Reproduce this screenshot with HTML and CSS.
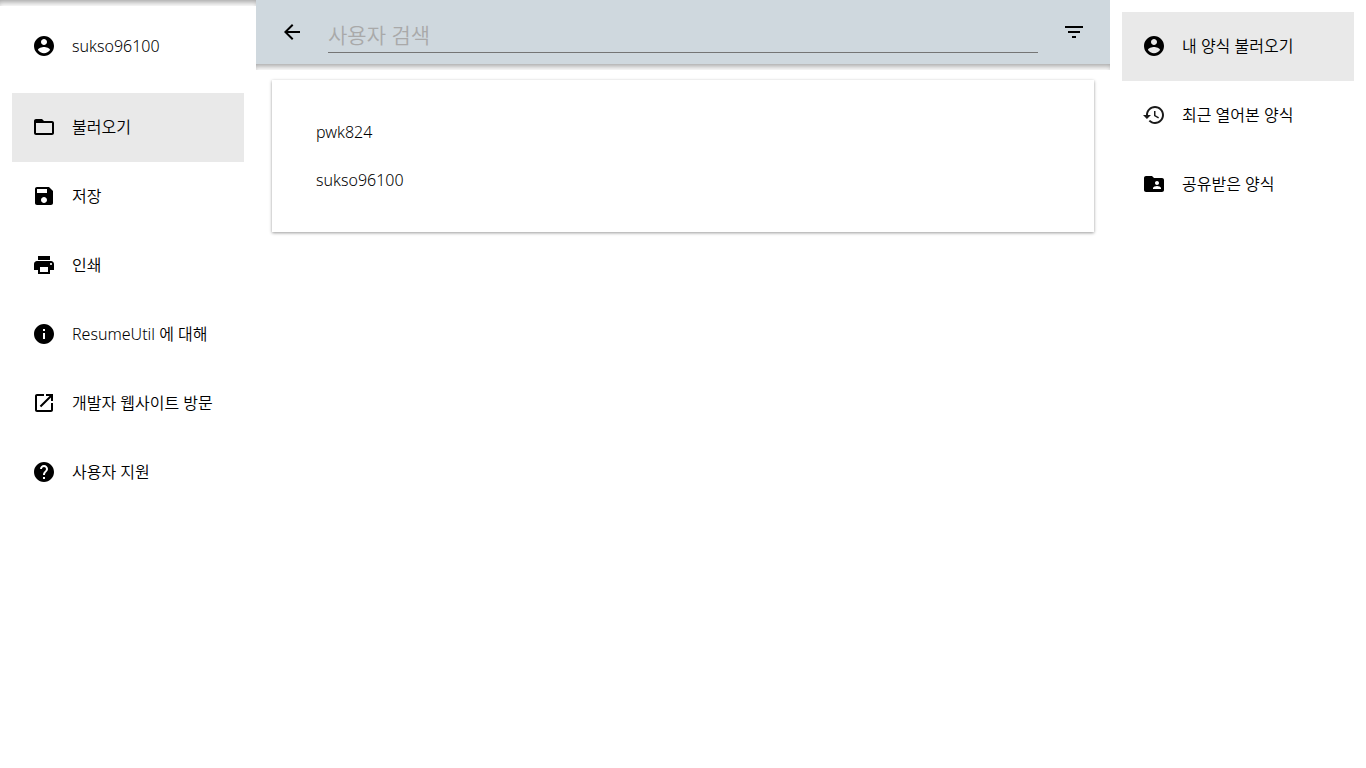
FILE: index.html
```html
<!DOCTYPE html>
<html lang="ko">
<head>
<meta charset="utf-8">
<meta name="viewport" content="width=device-width, initial-scale=1">
<title>ResumeUtil</title>
<link rel="stylesheet" href="styles.css">
</head>
<body>
<div class="app">
  <nav class="sidebar sidebar-main" aria-label="메뉴">
    <a class="item" href="#account">
      <svg class="icon" viewBox="0 0 24 24"><path d="M12 2C6.48 2 2 6.48 2 12s4.480 10 10 10 10-4.480 10-10S17.520 2 12 2zm0 3c1.660 0 3 1.340 3 3s-1.340 3-3 3-3-1.340-3-3 1.340-3 3-3zm0 14.200c-2.500 0-4.710-1.280-6-3.220.030-1.990 4-3.080 6-3.080 1.990 0 5.970 1.090 6 3.080-1.290 1.940-3.500 3.220-6 3.220z"/></svg>
      <span>sukso96100</span>
    </a>
    <div class="menu">
      <a class="item item-selected" href="#load" aria-current="page">
        <svg class="icon" viewBox="0 0 24 24"><path d="M20 6h-8l-2-2H4c-1.100 0-1.990.9-1.990 2L2 18c0 1.100.9 2 2 2h16c1.100 0 2-.9 2-2V8c0-1.100-.9-2-2-2zm0 12H4V8h16v10z"/></svg>
        <span>불러오기</span>
      </a>
      <a class="item" href="#save">
        <svg class="icon" viewBox="0 0 24 24"><path d="M17 3H5c-1.110 0-2 .9-2 2v14c0 1.100.89 2 2 2h14c1.100 0 2-.9 2-2V7l-4-4zm-5 16c-1.660 0-3-1.340-3-3s1.340-3 3-3 3 1.340 3 3-1.340 3-3 3zm3-10H5V5h10v4z"/></svg>
        <span>저장</span>
      </a>
      <a class="item" href="#print">
        <svg class="icon" viewBox="0 0 24 24"><path d="M19 8H5c-1.660 0-3 1.340-3 3v6h4v4h12v-4h4v-6c0-1.660-1.340-3-3-3zm-3 11H8v-5h8v5zm3-7c-.55 0-1-.45-1-1s.45-1 1-1 1 .45 1 1-.45 1-1 1zm-1-9H6v4h12V3z"/></svg>
        <span>인쇄</span>
      </a>
      <a class="item" href="#about">
        <svg class="icon" viewBox="0 0 24 24"><path d="M12 2C6.480 2 2 6.480 2 12s4.480 10 10 10 10-4.480 10-10S17.520 2 12 2zm1 15h-2v-6h2v6zm0-8h-2V7h2v2z"/></svg>
        <span>ResumeUtil 에 대해</span>
      </a>
      <a class="item" href="#website">
        <svg class="icon" viewBox="0 0 24 24"><path d="M19 19H5V5h7V3H5c-1.110 0-2 .9-2 2v14c0 1.100.89 2 2 2h14c1.100 0 2-.9 2-2v-7h-2v7zM14 3v2h3.590l-9.830 9.830 1.410 1.410L19 6.410V10h2V3h-7z"/></svg>
        <span>개발자 웹사이트 방문</span>
      </a>
      <a class="item" href="#support">
        <svg class="icon" viewBox="0 0 24 24"><path d="M12 2C6.480 2 2 6.480 2 12s4.480 10 10 10 10-4.480 10-10S17.520 2 12 2zm1 17h-2v-2h2v2zm2.070-7.750l-.9.920C13.450 12.900 13 13.500 13 15h-2v-.5c0-1.100.45-2.100 1.170-2.830l1.240-1.260c.37-.36.59-.86.59-1.410 0-1.100-.9-2-2-2s-2 .9-2 2H8c0-2.210 1.790-4 4-4s4 1.790 4 4c0 .88-.36 1.680-.93 2.250z"/></svg>
        <span>사용자 지원</span>
      </a>
    </div>
  </nav>

  <main class="content">
    <header class="toolbar">
      <button class="icon-button" type="button" aria-label="뒤로">
        <svg class="icon" viewBox="0 0 24 24"><path d="M20 11H7.830l5.590-5.590L12 4l-8 8 8 8 1.410-1.410L7.830 13H20v-2z"/></svg>
      </button>
      <input class="search" type="text" placeholder="사용자 검색" aria-label="사용자 검색">
      <button class="icon-button" type="button" aria-label="필터">
        <svg class="icon" viewBox="0 0 24 24"><path d="M10 18h4v-2h-4v2zM3 6v2h18V6H3zm3 7h12v-2H6v2z"/></svg>
      </button>
    </header>
    <ul class="card">
      <li><a class="user" href="#pwk824">pwk824</a></li>
      <li><a class="user" href="#sukso96100">sukso96100</a></li>
    </ul>
  </main>

  <nav class="sidebar" aria-label="양식">
    <a class="item item-selected" href="#mine" aria-current="page">
      <svg class="icon" viewBox="0 0 24 24"><path d="M12 2C6.480 2 2 6.480 2 12s4.480 10 10 10 10-4.480 10-10S17.520 2 12 2zm0 3c1.660 0 3 1.340 3 3s-1.340 3-3 3-3-1.340-3-3 1.340-3 3-3zm0 14.200c-2.500 0-4.710-1.280-6-3.220.030-1.990 4-3.080 6-3.080 1.990 0 5.970 1.090 6 3.080-1.290 1.940-3.500 3.220-6 3.220z"/></svg>
      <span>내 양식 불러오기</span>
    </a>
    <a class="item" href="#recent">
      <svg class="icon" viewBox="0 0 24 24"><g opacity=".9"><path d="M13 3c-4.970 0-9 4.030-9 9H1l3.890 3.890.070.140L9 12H6c0-3.870 3.130-7 7-7s7 3.130 7 7-3.130 7-7 7c-1.930 0-3.680-.79-4.940-2.060l-1.420 1.420C8.270 19.990 10.510 21 13 21c4.970 0 9-4.030 9-9s-4.030-9-9-9zm-1 5v5l4.280 2.540.72-1.210-3.500-2.080V8H12z"/></g></svg>
      <span>최근 열어본 양식</span>
    </a>
    <a class="item" href="#shared">
      <svg class="icon" viewBox="0 0 24 24"><path d="M20 6h-8l-2-2H4c-1.100 0-1.990.9-1.990 2L2 18c0 1.100.9 2 2 2h16c1.100 0 2-.9 2-2V8c0-1.100-.9-2-2-2zm-5 3c1.100 0 2 .9 2 2s-.9 2-2 2-2-.9-2-2 .9-2 2-2zm4 8h-8v-1c0-1.330 2.670-2 4-2s4 .67 4 2v1z"/></svg>
      <span>공유받은 양식</span>
    </a>
  </nav>
</div>
</body>
</html>
```
FILE: styles.css
```css
* {
  box-sizing: border-box;
}

body {
  margin: 0;
  background: #fff;
  color: #000;
  font: 16px/25px "Noto Sans", "Noto Sans CJK KR", sans-serif;
}

.app {
  display: grid;
  grid-template-columns: 256px minmax(0, 1fr) 256px;
  min-height: 100vh;
}

.sidebar {
  padding: 12px;
}

.sidebar-main,
.toolbar {
  position: relative;
}

.sidebar-main::before,
.toolbar::after {
  content: "";
  position: absolute;
  left: 0;
  right: 0;
  height: 6px;
  box-shadow: inset 0 5px 6px -3px rgba(0, 0, 0, 0.4);
  pointer-events: none;
}

.sidebar-main::before {
  top: 0;
}

.toolbar::after {
  top: 100%;
}

.menu {
  margin-top: 12px;
}

.item {
  display: flex;
  align-items: flex-start;
  gap: 16px;
  padding: 22px 20px;
  color: inherit;
  font-weight: 350;
  text-decoration: none;
}

.item-selected {
  background: #e9e9e9;
}

.icon {
  display: block;
  flex: none;
  width: 24px;
  height: 24px;
  fill: currentColor;
}

.toolbar {
  display: flex;
  align-items: center;
  gap: 16px;
  height: 64px;
  padding: 0 16px;
  background: #cfd8de;
}

.icon-button {
  flex: none;
  padding: 8px;
  border: 0;
  background: none;
  color: inherit;
}

.search {
  flex: 1;
  min-width: 0;
  height: 41px;
  padding: 6px 0 0;
  border: 0;
  border-bottom: 1px solid #757575;
  border-radius: 0;
  outline: 0;
  background: none;
  color: inherit;
  font-family: inherit;
  font-size: 21px;
  font-weight: 350;
}

.search::placeholder {
  color: #a9a9a9;
  opacity: 1;
}

.card {
  margin: 16px;
  padding: 28px;
  background: #fff;
  box-shadow: 0 1px 3px rgba(0, 0, 0, 0.4);
  list-style: none;
}

.user {
  display: flex;
  align-items: center;
  height: 48px;
  padding: 0 16px;
  color: inherit;
  font-weight: 350;
  text-decoration: none;
}
```
